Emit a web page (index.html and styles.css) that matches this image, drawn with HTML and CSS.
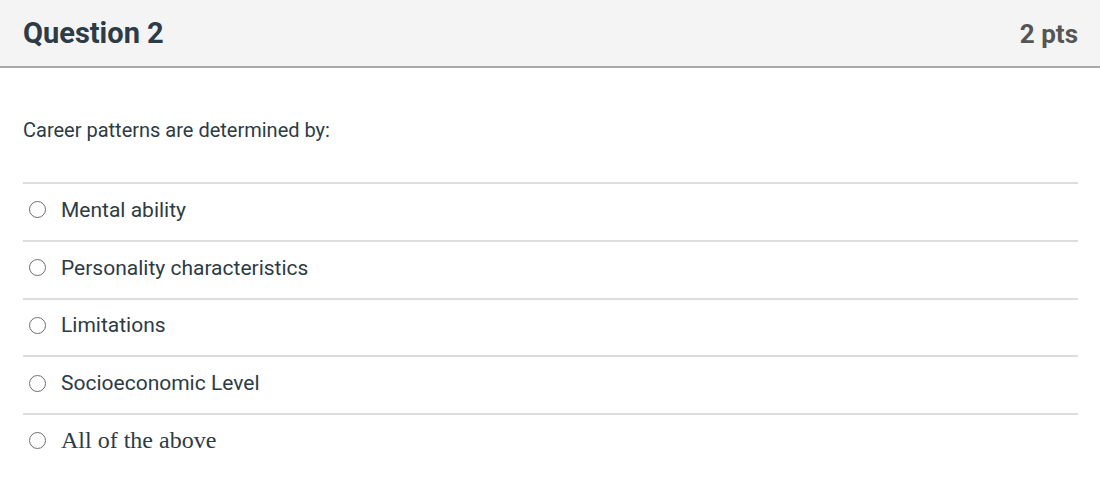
FILE: index.html
```html
<!DOCTYPE html>
<html>
<head>
<meta charset="utf-8">
<link rel="stylesheet" href="styles.css">
</head>
<body>
<div class="question">
  <div class="header">
    <h2 class="title">Question 2</h2>
    <div class="pts">2 pts</div>
  </div>
  <div class="content">
    <p class="prompt">Career patterns are determined by:</p>
    <div class="answers">
      <label class="answer"><span class="radio"></span><span class="label">Mental ability</span></label>
      <label class="answer"><span class="radio"></span><span class="label">Personality characteristics</span></label>
      <label class="answer"><span class="radio"></span><span class="label">Limitations</span></label>
      <label class="answer"><span class="radio"></span><span class="label">Socioeconomic Level</span></label>
      <label class="answer last"><span class="radio"></span><span class="label serif">All of the above</span></label>
    </div>
  </div>
</div>
</body>
</html>
```
FILE: styles.css
```css
html, body {
  margin: 0;
  padding: 0;
  background: #ffffff;
}
body {
  font-family: Roboto, "Liberation Sans", Arial, sans-serif;
  color: #2d3b45;
}
.header {
  height: 66px;
  background: #f4f4f4;
  border-bottom: 2px solid #a8a8a8;
  display: flex;
  align-items: center;
  justify-content: space-between;
  padding: 0 22px 0 23px;
}
.title {
  margin: 0;
  font-size: 29px;
  font-weight: 700;
  line-height: 34px;
  color: #2d3b45;
}
.pts {
  font-size: 26px;
  font-weight: 700;
  line-height: 34px;
  color: #555555;
  padding-top: 2px;
}
.content {
  padding: 0 22px 0 23px;
}
.prompt {
  margin: 0;
  padding-top: 49px;
  height: 114px;
  box-sizing: border-box;
  font-size: 20px;
  line-height: 26px;
  color: #2d3b45;
}
.answers {
  border-top: 2px solid #dddddd;
}
.answer {
  display: flex;
  align-items: center;
  height: 55.75px;
  box-sizing: content-box;
  border-bottom: 2px solid #dddddd;
  padding: 0 0 0 6px;
  font-size: 21px;
  color: #2d3b45;
}
.answer .label {
  position: relative;
  top: -2px;
}
.answer.last {
  border-bottom: none;
}
.radio {
  width: 17px;
  height: 17px;
  border: 1.5px solid #6e6e6e;
  border-radius: 50%;
  box-sizing: border-box;
  margin-right: 15px;
  flex: none;
  position: relative;
  top: -2px;
}
.serif {
  font-family: "Liberation Serif", "Times New Roman", serif;
  font-size: 24px;
}
```
